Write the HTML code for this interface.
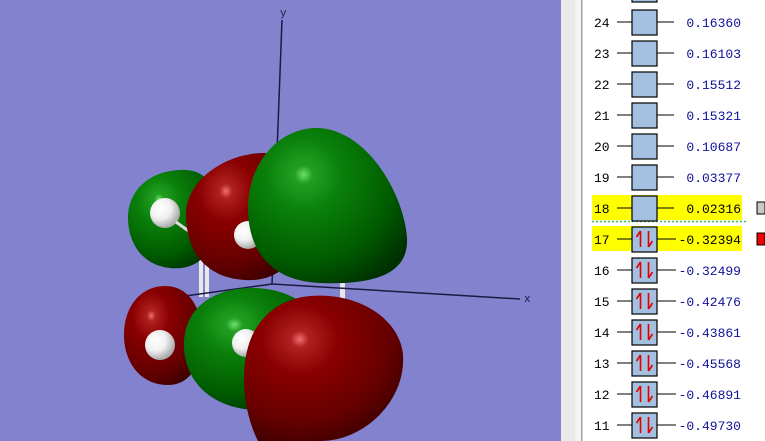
<!DOCTYPE html>
<html><head><meta charset="utf-8"><style>
html,body{margin:0;padding:0;width:765px;height:441px;overflow:hidden;background:#fff}
svg{display:block;position:absolute;left:0;top:0}
text{font-family:"Liberation Mono",monospace;font-size:13px}
</style></head><body>
<svg width="765" height="441" viewBox="0 0 765 441" xmlns="http://www.w3.org/2000/svg">
<defs>
<radialGradient id="g" cx="0.35" cy="0.3" r="0.8">
<stop offset="0" stop-color="#70e070"/><stop offset="0.07" stop-color="#22a022"/><stop offset="0.3" stop-color="#0a800a"/><stop offset="0.7" stop-color="#005c00"/><stop offset="1" stop-color="#003000"/></radialGradient>
<radialGradient id="r" cx="0.35" cy="0.3" r="0.8">
<stop offset="0" stop-color="#f07070"/><stop offset="0.07" stop-color="#b02020"/><stop offset="0.3" stop-color="#8a0000"/><stop offset="0.7" stop-color="#660000"/><stop offset="1" stop-color="#380000"/></radialGradient>
<radialGradient id="h" cx="0.35" cy="0.35" r="0.7">
<stop offset="0" stop-color="#ffffff"/><stop offset="0.5" stop-color="#f0f0f0"/><stop offset="1" stop-color="#a0a0a0"/></radialGradient>
<g id="occ"><line x1="617" y1="0" x2="676" y2="0" stroke="#000"/><rect x="632" y="-12" width="25" height="25" fill="#a4c0e0" stroke="#000" stroke-width="1.2"/><path d="M640.5 -8 V8 M640.5 -8 L636.5 -2 M648.5 -8 V8 M648.5 8 L652.5 2" stroke="#e00000" stroke-width="1.6" fill="none"/></g>
<g id="emp"><line x1="617" y1="0" x2="674" y2="0" stroke="#000"/><rect x="632" y="-12" width="25" height="25" fill="#a4c0e0" stroke="#000" stroke-width="1.2"/></g>
</defs>
<rect x="0" y="0" width="561" height="441" fill="#8282cf"/>
<rect x="561" y="0" width="14" height="441" fill="#eaeaea"/>
<rect x="575" y="0" width="6" height="441" fill="#f4f4f4"/>
<rect x="581" y="0" width="1.5" height="441" fill="#a0a0a0"/>
<line x1="282" y1="20" x2="272" y2="284" stroke="#1a1a40" stroke-width="1.5"/>
<text x="280" y="16" fill="#1a1a40" style="font-size:11px">y</text>
<rect x="199" y="255" width="4" height="42" fill="#e8e8e8"/><rect x="205" y="255" width="4" height="42" fill="#e8e8e8"/>
<rect x="340" y="282" width="5" height="20" fill="#e8e8e8"/>
<path d="M180 170 C215 168 220 200 215 230 C210 262 190 270 170 268 C140 265 128 240 128 218 C128 190 150 171 180 170 Z" fill="url(#g)"/>
<circle cx="165" cy="213" r="15" fill="url(#h)"/>
<line x1="176" y1="222" x2="190" y2="232" stroke="#ddd" stroke-width="3"/>
<path d="M262 153 C290 152 300 190 300 220 C300 260 280 282 245 280 C205 278 186 250 186 215 C186 180 225 154 262 153 Z" fill="url(#r)"/>
<circle cx="248" cy="235" r="14" fill="url(#h)"/>
<path d="M318 128 C368 130 404 195 407 238 C409 276 370 285 320 283 C272 281 248 252 248 208 C248 162 280 127 318 128 Z" fill="url(#g)"/>
<line x1="272" y1="284" x2="520" y2="299" stroke="#1a1a40" stroke-width="1.5"/>
<line x1="272" y1="284" x2="178" y2="297" stroke="#1a1a40" stroke-width="1.5"/>
<text x="524" y="302" fill="#1a1a40" style="font-size:11px">x</text>
<path d="M165 286 C190 286 202 310 202 335 C202 365 190 385 168 385 C140 385 124 362 124 335 C124 305 142 286 165 286 Z" fill="url(#r)"/>
<circle cx="160" cy="345" r="15" fill="url(#h)"/>
<path d="M250 288 C300 287 330 320 328 355 C325 395 295 412 255 410 C210 408 184 380 184 345 C184 310 210 289 250 288 Z" fill="url(#g)"/>
<circle cx="246" cy="343" r="14" fill="url(#h)"/>
<path d="M310 296 C360 292 400 320 403 355 C406 400 365 441 320 441 L258 441 C242 410 238 360 255 330 C268 308 288 298 310 296 Z" fill="url(#r)"/>
<rect x="592" y="195" width="150" height="25" fill="#ffff00"/>
<rect x="592" y="226" width="150" height="25" fill="#ffff00"/>
<line x1="592" y1="221.5" x2="746" y2="221.5" stroke="#40c040" stroke-width="1.5" stroke-dasharray="2,2"/>
<rect x="757" y="202" width="8" height="12" fill="#c8c8c8" stroke="#000"/>
<rect x="757" y="233" width="8" height="12" fill="#ee0000" stroke="#000"/>
<rect x="632" y="-23" width="25" height="25" fill="#a4c0e0" stroke="#000" stroke-width="1.2"/>
<g transform="translate(0,22)"><text x="594" y="5">24</text><use href="#emp"/><text x="741" y="5" fill="#10109a" text-anchor="end">0.16360</text></g>
<g transform="translate(0,53)"><text x="594" y="5">23</text><use href="#emp"/><text x="741" y="5" fill="#10109a" text-anchor="end">0.16103</text></g>
<g transform="translate(0,84)"><text x="594" y="5">22</text><use href="#emp"/><text x="741" y="5" fill="#10109a" text-anchor="end">0.15512</text></g>
<g transform="translate(0,115)"><text x="594" y="5">21</text><use href="#emp"/><text x="741" y="5" fill="#10109a" text-anchor="end">0.15321</text></g>
<g transform="translate(0,146)"><text x="594" y="5">20</text><use href="#emp"/><text x="741" y="5" fill="#10109a" text-anchor="end">0.10687</text></g>
<g transform="translate(0,177)"><text x="594" y="5">19</text><use href="#emp"/><text x="741" y="5" fill="#10109a" text-anchor="end">0.03377</text></g>
<g transform="translate(0,208)"><text x="594" y="5">18</text><use href="#emp"/><text x="741" y="5" text-anchor="end">0.02316</text></g>
<g transform="translate(0,239)"><text x="594" y="5">17</text><use href="#occ"/><text x="741" y="5" text-anchor="end">-0.32394</text></g>
<g transform="translate(0,270)"><text x="594" y="5">16</text><use href="#occ"/><text x="741" y="5" fill="#10109a" text-anchor="end">-0.32499</text></g>
<g transform="translate(0,301)"><text x="594" y="5">15</text><use href="#occ"/><text x="741" y="5" fill="#10109a" text-anchor="end">-0.42476</text></g>
<g transform="translate(0,332)"><text x="594" y="5">14</text><use href="#occ"/><text x="741" y="5" fill="#10109a" text-anchor="end">-0.43861</text></g>
<g transform="translate(0,363)"><text x="594" y="5">13</text><use href="#occ"/><text x="741" y="5" fill="#10109a" text-anchor="end">-0.45568</text></g>
<g transform="translate(0,394)"><text x="594" y="5">12</text><use href="#occ"/><text x="741" y="5" fill="#10109a" text-anchor="end">-0.46891</text></g>
<g transform="translate(0,425)"><text x="594" y="5">11</text><use href="#occ"/><text x="741" y="5" fill="#10109a" text-anchor="end">-0.49730</text></g>
</svg>
</body></html>
